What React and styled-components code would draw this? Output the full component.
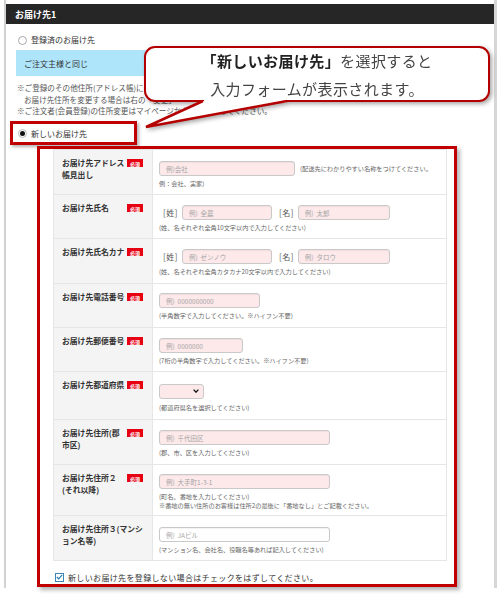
import React from "react";
import styled, { createGlobalStyle } from "styled-components";

const GlobalStyle = createGlobalStyle`
  html, body { margin: 0; padding: 0; background: #fff; }
  body {
    font-family: "Noto Sans CJK JP", "Noto Sans", sans-serif;
    color: #333;
  }
  * { box-sizing: border-box; }
`;

const Page = styled.div`
  position: relative;
  width: 500px;
  height: 596px;
  overflow: hidden;
`;

const Frame = styled.div`
  margin-left: 4px;
  width: 493px;
  height: 588px;
  padding-top: 4px;
  border-left: 2px solid #d2d2d2;
  border-right: 3px solid #d6d6d6;
`;

const Header = styled.div`
  display: flex;
  align-items: center;
  height: 20px;
  padding-left: 9px;
  background: #262626;
  color: #fff;
  font-size: 9px;
  font-weight: 700;
`;

const Section = styled.div`
  padding: 0 6px 0 10px;
`;

const RadioRow = styled.label`
  display: flex;
  align-items: center;
  gap: 4px;
  height: 16px;
  margin-top: 8px;
  padding-left: 2px;
  font-size: 8px;
  line-height: 12px;
`;

const Radio = styled.span`
  position: relative;
  width: 9px;
  height: 9px;
  border-radius: 50%;
  border: 1px solid ${p => (p.$checked ? "#bbb" : "#a8a8a8")};
  background: #fff;
  flex-shrink: 0;

  &::after {
    content: "";
    display: ${p => (p.$checked ? "block" : "none")};
    position: absolute;
    left: 1px;
    top: 1px;
    width: 5px;
    height: 5px;
    border-radius: 50%;
    background: #111;
  }
`;

const SameBox = styled.div`
  display: flex;
  align-items: center;
  height: 26px;
  margin-top: 2px;
  padding-left: 8px;
  background: #aee5fa;
  font-size: 8px;
`;

const Notes = styled.div`
  margin-top: 6px;
  padding-left: 1px;
  font-size: 7.6px;
  line-height: 11.5px;
  color: #555;
  white-space: nowrap;

  p { margin: 0; }
  p.indent { padding-left: 7px; }
`;

const Highlight = styled.label`
  display: flex;
  align-items: center;
  gap: 4px;
  width: 127px;
  height: 24px;
  margin: 4.5px 0 0 -6px;
  padding-left: 5px;
  border: 3px solid #c00000;
  box-shadow: 2px 2px 3px rgba(0, 0, 0, 0.3);
  font-size: 8px;
`;

const FormBox = styled.div`
  width: 420px;
  height: 441px;
  margin: 1px 0 0 21px;
  padding: 0 7px 0 13px;
  border: 3px solid #c00000;
  box-shadow: 3px 3px 4px rgba(0, 0, 0, 0.3);
`;

const Table = styled.div`
  border: 1px solid #e6e6e6;
  border-top: none;
`;

const Row = styled.div`
  display: grid;
  grid-template-columns: 99px 1fr;
  height: ${p => p.$h}px;
  border-top: 1px solid #e6e6e6;
`;

const LabelCell = styled.div`
  display: flex;
  justify-content: space-between;
  align-items: flex-start;
  padding: 7px 9px 0 8px;
  background: #f4f4f4;
  border-right: 1px solid #e6e6e6;
  font-size: 7.8px;
  font-weight: 700;
  line-height: 12px;
  color: #333;
  white-space: nowrap;
`;

const Badge = styled.span`
  display: flex;
  align-items: center;
  justify-content: center;
  width: 16px;
  height: 8px;
  margin-top: 2px;
  flex-shrink: 0;
  background: #e60012;
  color: #fff;
  font-size: 5px;
  font-weight: 700;
  line-height: 1;
`;

const ValueCell = styled.div`
  display: flex;
  flex-direction: column;
  align-items: flex-start;
  padding: ${p => p.$pt ?? 10}px 0 0 6px;
  background: #fff;
`;

const Field = styled.input`
  width: ${p => p.$w}px;
  height: 15px;
  padding: 0 6px;
  border: 1px solid #c9c9c9;
  border-radius: 3px;
  background: ${p => (p.$plain ? "#fff" : "#fde9ea")};
  box-shadow: inset 0 1px 1px rgba(0, 0, 0, 0.05);
  font-family: inherit;
  font-size: 6.5px;
  color: #333;
  outline: none;

  &::placeholder { color: #a5a5a5; }
`;

const Hint = styled.div`
  margin-top: ${p => p.$mt ?? 3}px;
  font-size: 6.2px;
  line-height: 9px;
  color: #666;
  white-space: nowrap;
`;

const InlineRow = styled.div`
  display: flex;
  align-items: center;
  gap: ${p => p.$gap ?? 5}px;
`;

const Bracket = styled.span`
  margin: 0 4px 0 ${p => p.$ml}px;
  font-size: 8px;
  letter-spacing: 0.5px;
  color: #555;
`;

const SelectWrap = styled.div`
  position: relative;
  margin-top: 2px;
`;

const Select = styled.select`
  appearance: none;
  display: block;
  width: 45px;
  height: 15px;
  border: 1px solid #c9c9c9;
  border-radius: 3px;
  background: #fde9ea;
  outline: none;
`;

const Chevron = styled.svg`
  position: absolute;
  right: 5px;
  top: 5px;
  pointer-events: none;
`;

const CheckRow = styled.label`
  display: flex;
  align-items: center;
  gap: 4px;
  height: 12px;
  margin-top: 10px;
  padding-left: 2px;
  font-size: 8px;
  letter-spacing: 0.35px;
  color: #333;
`;

const CheckBox = styled.span`
  display: flex;
  align-items: center;
  justify-content: center;
  width: 9px;
  height: 9px;
  border: 1px solid #3b86b5;
  background: #fff;
`;

const Callout = styled.div`
  position: absolute;
  left: 144px;
  top: 46px;
  filter: drop-shadow(2px 2px 2px rgba(0, 0, 0, 0.35));
`;

const CalloutBox = styled.div`
  display: flex;
  flex-direction: column;
  align-items: center;
  justify-content: center;
  width: 346px;
  height: 56px;
  padding-top: 2px;
  border: 2.5px solid #b50000;
  border-radius: 11px;
  background: #fff;
  font-size: 15px;
  line-height: 28px;
  letter-spacing: 0.4px;
  color: #444;

  strong { font-weight: 700; color: #222; }
`;

const Tail = styled.svg`
  position: absolute;
  left: -4px;
  top: 49px;
`;

function FormRow({ label, required = true, h, pt, children }) {
  return (
    <Row $h={h}>
      <LabelCell>
        <span>{label}</span>
        {required && <Badge>必須</Badge>}
      </LabelCell>
      <ValueCell $pt={pt}>{children}</ValueCell>
    </Row>
  );
}

export default function App() {
  return (
    <Page>
      <GlobalStyle />
      <Frame>
        <Header>お届け先1</Header>
        <Section>
          <RadioRow>
            <Radio />
            登録済のお届け先
          </RadioRow>
          <SameBox>ご注文主様と同じ</SameBox>
          <Notes>
            <p>※ご登録のその他住所(アドレス帳)にお届け</p>
            <p className="indent">お届け先住所を変更する場合は右の「変更」</p>
            <p>※ご注文者(会員登録)の住所変更はマイページから変更を行ってください。</p>
          </Notes>
          <Highlight>
            <Radio $checked />
            新しいお届け先
          </Highlight>
          <FormBox>
            <Table>
              <FormRow label={<>お届け先アドレス<br />帳見出し</>} h={45} pt={11}>
                <InlineRow>
                  <Field $w={136} placeholder="例)会社" />
                  <Hint $mt={0}>(配送先にわかりやすい名称をつけてください。</Hint>
                </InlineRow>
                <Hint>例：会社、実家)</Hint>
              </FormRow>
              <FormRow label="お届け先氏名" h={44}>
                <InlineRow $gap={0}>
                  <Bracket $ml={4}>[姓]</Bracket>
                  <Field $w={90} placeholder="例)  全農" />
                  <Bracket $ml={7}>[名]</Bracket>
                  <Field $w={92} placeholder="例)  太郎" />
                </InlineRow>
                <Hint>(姓、名それぞれ全角10文字以内で入力してください)</Hint>
              </FormRow>
              <FormRow label="お届け先氏名カナ" h={45}>
                <InlineRow $gap={0}>
                  <Bracket $ml={4}>[姓]</Bracket>
                  <Field $w={90} placeholder="例)  ゼンノウ" />
                  <Bracket $ml={7}>[名]</Bracket>
                  <Field $w={92} placeholder="例)  タロウ" />
                </InlineRow>
                <Hint>(姓、名それぞれ全角カタカナ20文字以内で入力してください)</Hint>
              </FormRow>
              <FormRow label="お届け先電話番号" h={44} pt={9}>
                <Field $w={101} placeholder="例)  0000000000" />
                <Hint>(半角数字で入力してください。※ハイフン不要)</Hint>
              </FormRow>
              <FormRow label="お届け先郵便番号" h={44}>
                <Field $w={84} placeholder="例)  0000000" />
                <Hint>(7桁の半角数字で入力してください。※ハイフン不要)</Hint>
              </FormRow>
              <FormRow label="お届け先都道府県" h={48}>
                <SelectWrap>
                  <Select defaultValue="">
                    <option value="" />
                  </Select>
                  <Chevron width="6" height="4" viewBox="0 0 6 4">
                    <polyline points="0.6,0.6 3,3.2 5.4,0.6" fill="none" stroke="#111" strokeWidth="1.3" />
                  </Chevron>
                </SelectWrap>
                <Hint $mt={4}>(都道府県名を選択してください)</Hint>
              </FormRow>
              <FormRow label={<>お届け先住所(郡<br />市区)</>} h={45}>
                <Field $w={171} placeholder="例)  千代田区" />
                <Hint>(郡、市、区を入力してください)</Hint>
              </FormRow>
              <FormRow label={<>お届け先住所２<br />(それ以降)</>} h={51} pt={9}>
                <Field $w={171} placeholder="例)  大手町1-3-1" />
                <Hint>(町名、番地を入力してください)</Hint>
                <Hint $mt={0}>※番地の無い住所のお客様は住所2の最後に「番地なし」とご記載ください。</Hint>
              </FormRow>
              <FormRow label={<>お届け先住所３(マンシ<br />ョン名等)</>} required={false} h={45} pt={11}>
                <Field $w={171} $plain placeholder="例)  JAビル" />
                <Hint>(マンション名、会社名、役職名等あれば記入してください)</Hint>
              </FormRow>
            </Table>
            <CheckRow>
              <CheckBox>
                <svg width="7" height="6" viewBox="0 0 7 6">
                  <polyline points="0.8,3 2.7,4.8 6.2,0.8" fill="none" stroke="#2c7fae" strokeWidth="1.2" />
                </svg>
              </CheckBox>
              新しいお届け先を登録しない場合はチェックをはずしてください。
            </CheckRow>
          </FormBox>
        </Section>
      </Frame>
      <Callout>
        <CalloutBox>
          <div><strong>「新しいお届け先」</strong>を選択すると</div>
          <div>入力フォームが表示されます。</div>
        </CalloutBox>
        <Tail width="155" height="37" viewBox="0 0 155 37">
          <polygon points="63,6 147,6 6,32" fill="#fff" />
          <rect x="64" y="2" width="82" height="6" fill="#fff" />
          <polyline points="63,6 6,32 147,6" fill="none" stroke="#b50000" strokeWidth="2.5" strokeLinejoin="miter" />
        </Tail>
      </Callout>
    </Page>
  );
}
